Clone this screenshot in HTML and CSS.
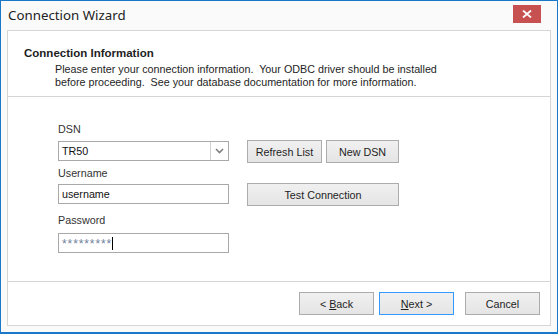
FILE: index.html
```html
<!DOCTYPE html>
<html>
<head>
  <meta charset='utf-8'>
  <title>Connection Wizard</title>
  <link rel="stylesheet" href="styles.css">
</head>
<body>
  <div class='window'>
    <div class='titlebar'>
      <span class='title'>Connection Wizard</span>
      <span class='close'>
        <svg width='10' height='8' viewBox='0 0 10 8'>
          <path d='M1 0.5 L9 7.5 M9 0.5 L1 7.5' stroke='#fff' stroke-width='1.8'/>
        </svg>
      </span>
    </div>
    <div class='frame'>
      <div class='panel'>
        <div class='header'>
          <h1>Connection Information</h1>
          <p>Please enter your connection information.&nbsp; Your ODBC driver should be installed<br>before proceeding.&nbsp; See your database documentation for more information.</p>
        </div>
        <div class='content'>
          <div class='col-left'>
            <label class='lbl lbl-dsn'>DSN</label>
            <div class='combo'>
              <span class='combo-text'>TR50</span>
              <span class='combo-arrow'>
                <svg width='9' height='6' viewBox='0 0 9 6'>
                  <path d='M1 1 L4.5 4.5 L8 1' fill='none' stroke='#808080' stroke-width='1.6'/>
                </svg>
              </span>
            </div>
            <label class='lbl lbl-user'>Username</label>
            <div class='field'>username</div>
            <label class='lbl lbl-pass'>Password</label>
            <div class='field field-pass'><span class='stars'>*********</span><span class='caret'></span></div>
          </div>
          <div class='col-right'>
            <div class='btn-row'>
              <button class='btn btn-refresh'>Refresh List</button>
              <button class='btn btn-new'>New DSN</button>
            </div>
            <button class='btn btn-test'>Test Connection</button>
          </div>
        </div>
        <div class='footer'>
          <button class='btn'>&lt; <u>B</u>ack</button>
          <button class='btn btn-next'><u>N</u>ext &gt;</button>
          <button class='btn btn-cancel'>Cancel</button>
        </div>
      </div>
    </div>
  </div>
</body>
</html>
```

FILE: styles.css
```css
* { box-sizing: border-box; }

body {
  margin: 0;
  background-color: #fafafa;
  font-family: "Liberation Sans", Arial, sans-serif;
  font-size: 10.75px;
  color: #1e1e1e;
}

.window {
  width: 558px;
  height: 334px;
  border: 1px solid #1a78c9;
  border-bottom-width: 2px;
  background-color: #fafafa;
  display: flex;
  flex-direction: column;
}

.titlebar {
  height: 29px;
  display: flex;
  align-items: center;
  justify-content: space-between;
  padding: 0 16px 0 7px;
}

.title {
  font-family: "Noto Sans", sans-serif;
  font-size: 13.3px;
  color: #222;
  margin-top: -1px;
}

.close {
  width: 28px;
  height: 18px;
  margin-top: -3px;
  background-color: #c75050;
  display: flex;
  align-items: center;
  justify-content: center;
}

.frame {
  flex: 1;
  padding: 0 6px 6px 6px;
  display: flex;
}

.panel {
  flex: 1;
  border: 1px solid #d5d5d5;
  background-color: #fff;
  display: flex;
  flex-direction: column;
}

.header {
  height: 66px;
  border-bottom: 1px solid #d5d5d5;
  padding: 14px 0 0 16px;
}

.header h1 {
  margin: 0;
  font-size: 11.5px;
  font-weight: bold;
  color: #1e1e1e;
  line-height: 16px;
}

.header p {
  margin: 2px 0 0 31px;
  line-height: 13px;
  color: #1e1e1e;
}

.content {
  height: 185px;
  border-bottom: 1px solid #d5d5d5;
  padding: 25px 0 0 50px;
  display: flex;
  gap: 18px;
}

.col-left {
  width: 171px;
  display: flex;
  flex-direction: column;
}

.lbl {
  line-height: 14px;
  color: #333;
}

.lbl-dsn { margin-bottom: 5px; }
.lbl-user { margin: 5px 0 4px; }
.lbl-pass { margin: 9px 0 6px; }

.combo, .field {
  height: 20px;
  border: 1px solid #a9a9a9;
  background-color: #fff;
  display: flex;
  align-items: center;
  padding-left: 3px;
  color: #111;
}

.combo-text { flex: 1; }

.combo-arrow {
  width: 18px;
  height: 100%;
  border-left: 1px solid #d0d0d0;
  display: flex;
  align-items: center;
  justify-content: center;
}

.stars {
  color: #6f7f9c;
  font-size: 12px;
  letter-spacing: 0.9px;
  margin-top: 2px;
}

.caret {
  width: 1px;
  height: 13px;
  background-color: #000;
}

.col-right {
  padding-top: 18px;
  display: flex;
  flex-direction: column;
  gap: 20px;
}

.btn-row {
  display: flex;
  gap: 4px;
}

.btn {
  width: 75px;
  height: 23px;
  padding: 0;
  border: 1px solid #acacac;
  background: linear-gradient(#f0f0f0, #e5e5e5);
  font-family: "Liberation Sans", Arial, sans-serif;
  font-size: 10.75px;
  color: #1e1e1e;
}

.btn-new { width: 73px; }
.btn-test { width: 152px; }

.footer {
  flex: 1;
  display: flex;
  justify-content: flex-end;
  padding: 10px 10px 0 0;
}

.footer .btn { margin-left: 5px; }
.footer .btn-next { border-color: #3399ff; }
.footer .btn-cancel { margin-left: 11px; }
```
